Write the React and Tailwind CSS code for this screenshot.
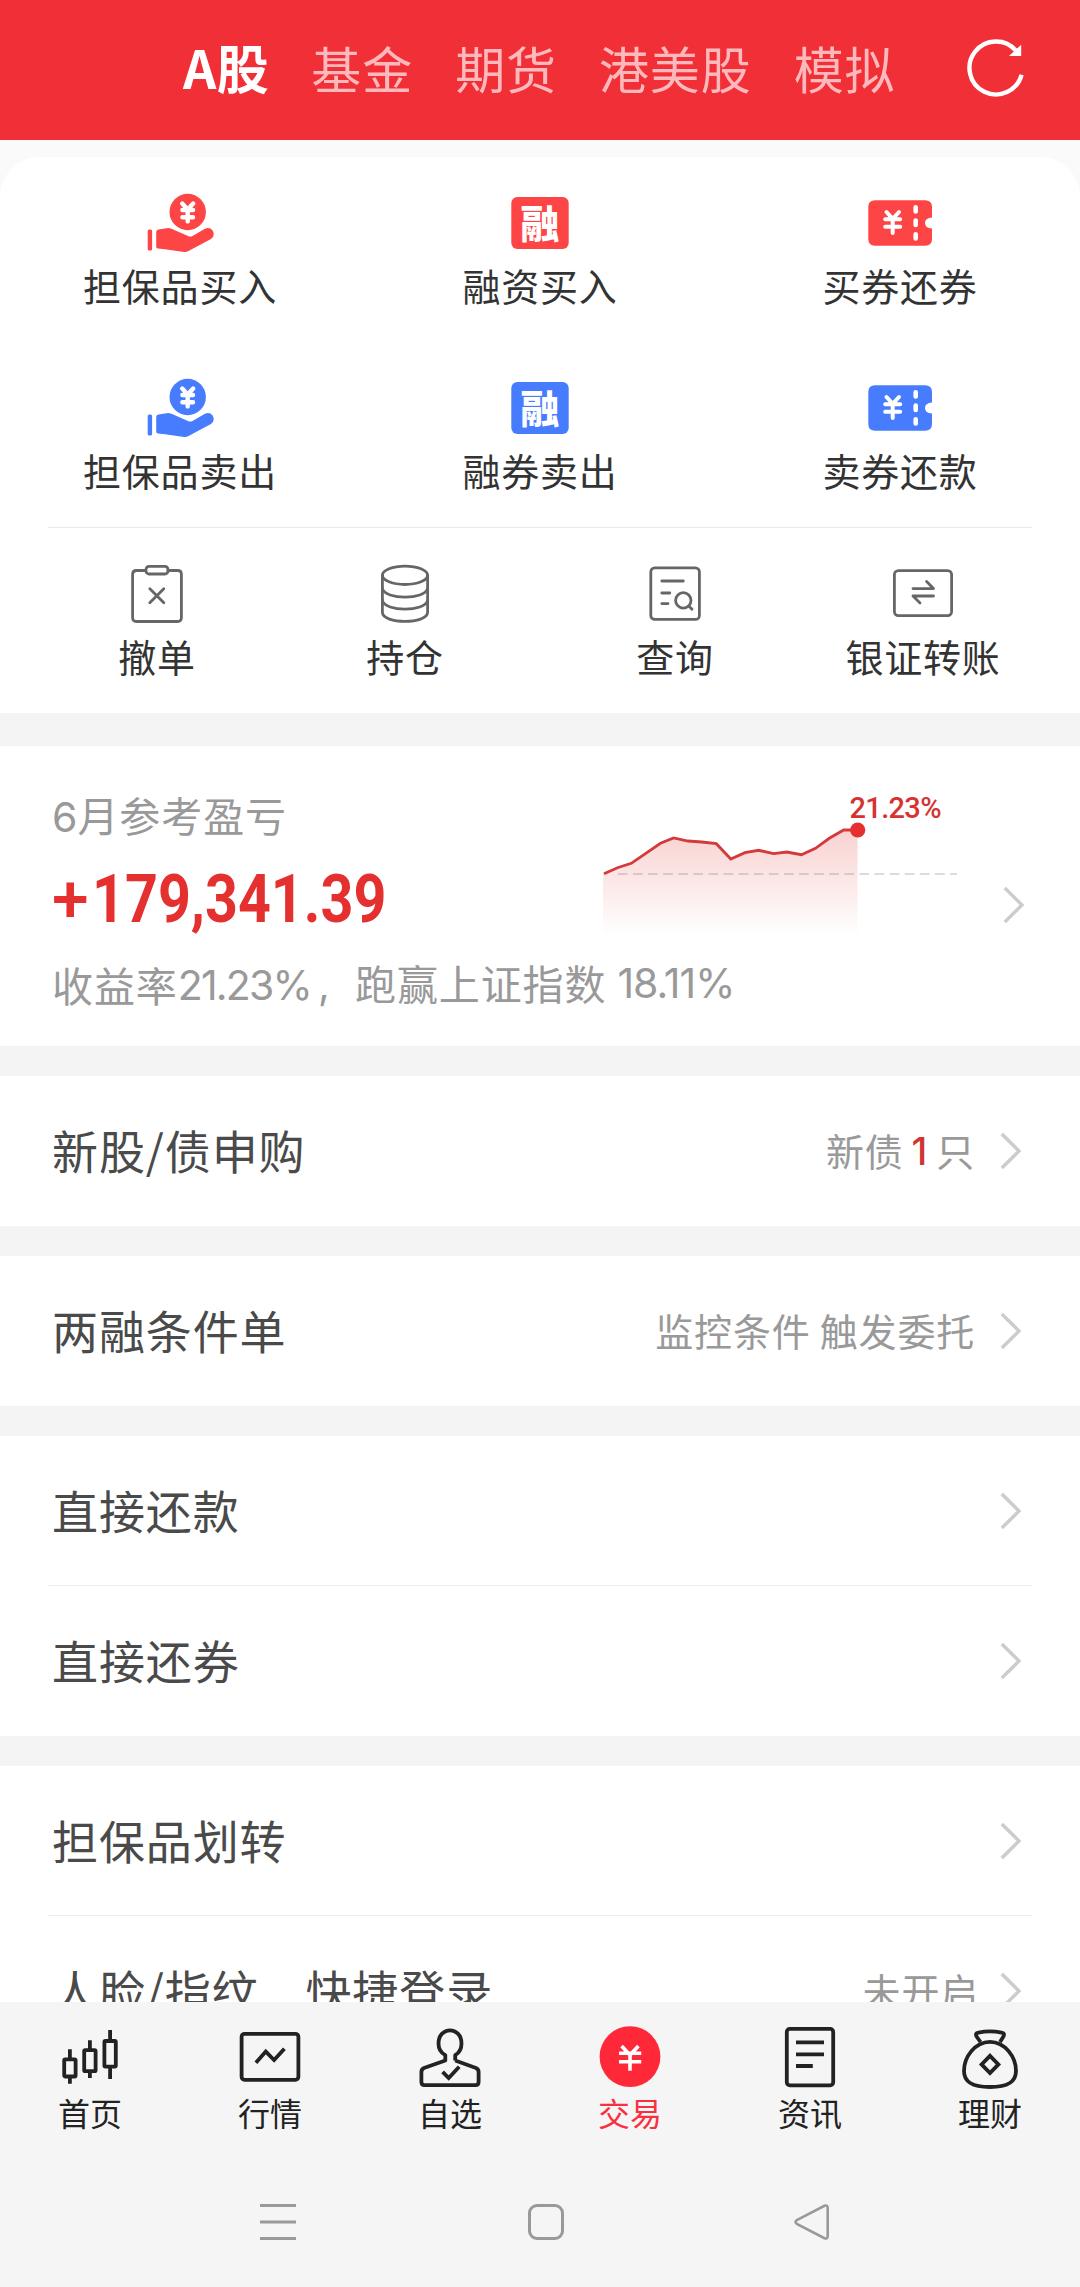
import React, { useState } from 'react';

const tabs = ['A股', '基金', '期货', '港美股', '模拟'];

const RefreshIcon = () => (
  <svg width="60" height="60" viewBox="0 0 60 60" fill="none" stroke="#fff" strokeWidth="4.4" className="overflow-visible">
    <path d="M55.6 34.7 A26.5 26.5 0 1 1 50 10.6" />
    <path d="M55.2 4.8 V16 H43 Z" fill="#fff" stroke="none" />
  </svg>
);

const HandIcon = ({ color }) => (
  <svg width="67" height="60" viewBox="0 0 67 60">
    <circle cx="40.7" cy="19" r="18.2" fill={color} />
    <path
      d="M35.2 10.6 L40.7 16.4 L46.2 10.6 M35.4 17 H46 M35.4 24.2 H46 M40.7 16.4 V28.4"
      fill="none"
      stroke="#fff"
      strokeWidth="4.4"
      strokeLinecap="round"
    />
    <rect x="0.7" y="36.5" width="4.4" height="21" rx="1.6" fill={color} />
    <path
      d="M9.2 39 Q9.3 36.8 11.5 36.6 L19.5 35.2 Q22 34.8 24.5 35.7 L41 43 Q43.3 44.2 45.5 43 L57.5 36 Q62.5 33.5 65.6 37.5 Q68.5 42.5 64 45.9 L41 58.3 Q39.3 59.4 37 59 L18 56.2 L11 55.6 Q9.2 55.4 9.2 53.4 Z"
      fill={color}
    />
  </svg>
);

const RongIcon = ({ color }) => (
  <svg width="58" height="52" viewBox="0 0 58 52" className="overflow-visible">
    <rect x="0.3" y="0" width="57.4" height="52" rx="6" fill={color} />
    <text x="29" y="40.5" fontSize="39" fontWeight="900" fill="#fff" textAnchor="middle">融</text>
  </svg>
);

const TicketIcon = ({ color }) => (
  <svg width="64" height="46" viewBox="0 0 64 46">
    <path
      d="M7 0.3 H57 Q64 0.3 64 7 V17.5 Q57 18 57 23 Q57 28 64 28.5 V39 Q64 45.7 57 45.7 H7 Q0.3 45.7 0.3 39 V7 Q0.3 0.3 7 0.3 Z"
      fill={color}
    />
    <path
      d="M18.5 12 L24.7 18.8 L31 12 M17.2 19.2 H32.2 M17.2 26.7 H32.2 M24.7 19 V33"
      fill="none"
      stroke="#fff"
      strokeWidth="4"
      strokeLinecap="round"
    />
    <path d="M47.7 7.3 V11.5 M47.7 20.6 V25 M47.7 34.3 V38.5" stroke="#fff" strokeWidth="4.6" strokeLinecap="round" />
  </svg>
);

const RED = '#fe4545';
const BLUE = '#487cff';

const mainActions = [
  { label: '担保品买入', icon: <HandIcon color={RED} /> },
  { label: '融资买入', icon: <RongIcon color={RED} /> },
  { label: '买券还券', icon: <TicketIcon color={RED} /> },
  { label: '担保品卖出', icon: <HandIcon color={BLUE} /> },
  { label: '融券卖出', icon: <RongIcon color={BLUE} /> },
  { label: '卖券还款', icon: <TicketIcon color={BLUE} /> },
];

const Line = ({ children }) => (
  <svg
    width="60"
    height="60"
    viewBox="0 0 60 60"
    fill="none"
    stroke="#666"
    strokeWidth="2.8"
    strokeLinecap="round"
    strokeLinejoin="round"
  >
    {children}
  </svg>
);

const subActions = [
  [
    {
      label: '撤单',
      icon: (
        <Line>
          <path d="M18.5 6.5 H9.5 Q5.6 6.5 5.6 10.5 V53.5 Q5.6 57.5 9.5 57.5 H50.5 Q54.4 57.5 54.4 53.5 V10.5 Q54.4 6.5 50.5 6.5 H41" />
          <rect x="19" y="2.4" width="22" height="7.6" rx="3" />
          <path d="M22.8 24.8 L36.8 38.8 M36.8 24.8 L22.8 38.8" />
        </Line>
      ),
    },
    {
      label: '持仓',
      icon: (
        <Line>
          <ellipse cx="30" cy="11.3" rx="22.6" ry="9.2" />
          <path d="M7.4 11.3 V48.3 C7.4 60.5 52.6 60.5 52.6 48.3 V11.3" />
          <path d="M7.4 24.5 C10 36 50 36 52.6 24.5 M7.4 36.5 C10 48 50 48 52.6 36.5" />
        </Line>
      ),
    },
  ],
  [
    {
      label: '查询',
      icon: (
        <Line>
          <rect x="5.8" y="3.8" width="48.6" height="51.6" rx="4" />
          <path d="M16.8 17 H38.3 M16.8 29 H24.8 M16.8 39.6 H23" />
          <circle cx="38.3" cy="36.4" r="7.7" />
          <path d="M43.8 42 L47 45.3" />
        </Line>
      ),
    },
    {
      label: '银证转账',
      icon: (
        <Line>
          <rect x="1.4" y="6.6" width="57.2" height="45" rx="4" />
          <path d="M20 24.6 H40.5 L33.6 17.6 M40.5 32 H20 L27 39" />
        </Line>
      ),
    },
  ],
];

const Chevron = () => (
  <svg width="22" height="38" viewBox="0 0 22 38" fill="none" stroke="#ccc" strokeWidth="3.4">
    <path d="M1.8 2 L19 19 L1.8 36" />
  </svg>
);

const groups = [
  [{ label: '新股/债申购', value: (<>新债<b className="mx-[8px] pt-[2px] font-['Inter'] text-[38px] font-medium text-[#d03535]">1</b>只</>) }],
  [{ label: '两融条件单', value: '监控条件 触发委托' }],
  [{ label: '直接还款' }, { label: '直接还券' }],
  [{ label: '担保品划转' }, { label: '人脸/指纹　快捷登录', value: <span className="-mr-[4px]">未开启</span> }],
];

const NavIcon = ({ children }) => (
  <svg width="66" height="66" viewBox="0 0 66 66" fill="none" stroke="#222" strokeWidth="3.8">
    {children}
  </svg>
);

const navItems = [
  {
    label: '首页',
    icon: (
      <NavIcon>
        <rect x="7.2" y="35.3" width="11.4" height="17.2" rx="1" />
        <rect x="27.2" y="26.2" width="11.4" height="21" rx="1" />
        <rect x="47.4" y="17" width="11.4" height="25.6" rx="1" />
        <path d="M12.9 25.3 V35 M12.9 53 V59.7 M32.9 16.3 V26 M32.9 47 V54 M53.1 6 V17 M53.1 43 V55" />
      </NavIcon>
    ),
  },
  {
    label: '行情',
    icon: (
      <NavIcon>
        <rect x="4.6" y="9.8" width="56.8" height="46" rx="3" />
        <path d="M18.9 38.7 L28.8 27.6 L37.1 36 L47.4 24.7" />
      </NavIcon>
    ),
  },
  {
    label: '自选',
    icon: (
      <NavIcon>
        <path
          d="M38.2 36.5 V31.2 Q44.5 27.5 44.5 19.5 C44.5 2 21.5 2 21.5 19.5 Q21.5 27.5 28.3 31.2 V36.5 L7 44 Q4.4 45.2 4.4 48 V58 Q4.4 61.2 7.5 61.2 H58.5 Q61.6 61.2 61.6 58 V48 Q61.6 45.2 59 44 L38.2 36.5"
          strokeLinejoin="round"
        />
        <path d="M25.6 47.8 L31.7 54 L42.2 42.8" />
      </NavIcon>
    ),
  },
  {
    label: '交易',
    active: true,
    icon: (
      <NavIcon>
        <circle cx="33" cy="32.7" r="30.4" fill="#ff2838" stroke="none" />
        <path d="M24.6 22 L33 31 L41.4 22 M22 29.3 H44.2 M22 37.7 H44.2 M33 30 V46.7" stroke="#fff" strokeWidth="3.6" />
      </NavIcon>
    ),
  },
  {
    label: '资讯',
    icon: (
      <NavIcon>
        <rect x="9.8" y="4.9" width="46.4" height="56.4" rx="3" />
        <path d="M19 18.3 H47 M19 30.3 H47 M19 42 H35.8" />
      </NavIcon>
    ),
  },
  {
    label: '理财',
    icon: (
      <NavIcon>
        <path d="M23.5 18 L19.6 12.6 Q17.8 9.2 21.4 8.6 Q33 6.2 44.6 8.6 Q48.2 9.2 46.4 12.6 L43 18" />
        <path d="M33 17.8 C48 17.8 59 33 59 47 C59 58.5 50 63 33 63 C16 63 7 58.5 7 47 C7 33 18 17.8 33 17.8 Z" />
        <path d="M33 31.8 L41.4 40.4 L33 49 L24.6 40.4 Z" />
      </NavIcon>
    ),
  },
];

const ProfitChart = () => {
  const line =
    '4,83.7 17.5,77.7 31.3,73.3 60.5,53.3 73.6,48 88,51 101.8,52 116.3,53.7 130.8,69 144.9,62.7 158.7,60.3 173.5,63.7 186.9,62 201.4,64.7 215.5,58.3 229.3,48.3 243.7,40 257.5,40';
  return (
    <svg width="360" height="150" viewBox="0 0 360 150" className="font-['Roboto']">
      <defs>
        <linearGradient id="profit" x1="0" y1="40" x2="0" y2="146" gradientUnits="userSpaceOnUse">
          <stop offset="0" stopColor="#e53030" stopOpacity="0.22" />
          <stop offset="1" stopColor="#e53030" stopOpacity="0" />
        </linearGradient>
      </defs>
      <line x1="17.8" y1="84" x2="357" y2="84" stroke="#dcdcdc" strokeWidth="2" strokeDasharray="9.8 5.3" />
      <polygon points={`3,146 3,84 ${line} 257.5,146`} fill="url(#profit)" />
      <polyline points={line} fill="none" stroke="#d33a3a" strokeWidth="2.8" />
      <circle cx="257.7" cy="40" r="7.6" fill="#e53030" />
      <text x="249.5" y="28" fontSize="29" fontWeight="500" fill="#d63232" textLength="92">21.23%</text>
    </svg>
  );
};

const App = () => {
  const [tab, setTab] = useState('A股');

  return (
    <div className="flex h-[2287px] w-[1080px] flex-col overflow-hidden bg-[#f4f4f4] font-['Noto_Sans_CJK_SC',sans-serif] text-[#333]">
      <header className="flex h-[140px] shrink-0 items-center justify-between bg-[#f12f37] pr-[54px] pl-[183px]">
        <nav className="flex items-center gap-[42px] pb-[6px] text-[50px] leading-[60px] tracking-[0.9px]">
          {tabs.map((t) => (
            <button
              key={t}
              onClick={() => setTab(t)}
              className={t === tab ? 'text-[52px] font-bold tracking-[0.5px] text-white' : 'text-[#ffb9bc]'}
            >
              {t}
            </button>
          ))}
        </nav>
        <RefreshIcon />
      </header>

      <main className="min-h-0 flex-1 overflow-hidden">
        <div className="bg-[#fafafa] pt-[17px]">
          <section className="h-[556px] rounded-t-[40px] bg-white">
            <div className="grid h-[370px] grid-cols-3 grid-rows-2">
              {mainActions.map((a) => (
                <div key={a.label} className="flex flex-col items-center pt-[34px]">
                  <div className="flex h-[64px] items-center">{a.icon}</div>
                  <span className="mt-[9px] text-[38px] leading-[42px] tracking-[0.8px]">{a.label}</span>
                </div>
              ))}
            </div>
            <div className="mx-12 h-px bg-[#e9e9e9]" />
            <div className="flex gap-[22px] px-[33px] pt-[36px]">
              {subActions.map((pair, i) => (
                <div key={i} className="grid flex-1 grid-cols-2">
                  {pair.map((a) => (
                    <div key={a.label} className="flex flex-col items-center">
                      {a.icon}
                      <span className="mt-[11px] text-[38px] leading-[42px] tracking-[0.8px]">{a.label}</span>
                    </div>
                  ))}
                </div>
              ))}
            </div>
          </section>
        </div>

        <section className="mt-[33px] flex h-[300px] bg-white pl-[52px] text-[#999]">
          <div className="w-[548px] pt-[43px] whitespace-nowrap">
            <p className="text-[41px] leading-[50px] tracking-[0.9px]">
              <span className="font-['Inter'] tracking-normal">6</span>月参考盈亏
            </p>
            <p className="mt-[22px] flex font-['Roboto'] leading-[72px] text-[#e53030]">
              <span className="w-[40px] text-[66px] font-medium">+</span>
              <span className="origin-left scale-x-[0.87] text-[66px] font-bold">179,341.39</span>
            </p>
            <p className="mt-[22px] flex items-center text-[41px] leading-[50px] tracking-[0.9px]">
              收益率
              <span className="pt-[2px] font-['Inter'] tracking-[-1.8px]">21.23%</span>
              <span className="w-[44px] shrink-0 pl-[7px] font-['Inter']">,</span>
              <span className="-mt-[5px]">跑赢上证指数</span>
              <span className="-mt-[3px] ml-[11px] font-['Inter'] tracking-[-1px]">18.11%</span>
            </p>
          </div>
          <div className="pt-[44px]">
            <ProfitChart />
          </div>
          <div className="ml-[43px] pt-[140px]">
            <Chevron />
          </div>
        </section>

        {groups.map((rows, i) => (
          <section key={i} className="mt-[30px] bg-white">
            {rows.map((row, j) => (
              <div key={row.label}>
                {j > 0 && <div className="mx-12 -mt-px h-px bg-[#ececec]" />}
                <div className="flex h-[150px] items-center pr-[58px] pl-[52px]">
                  <span className="flex-1 pb-[4px] text-[46px] leading-[60px] tracking-[0.9px] text-[#4a4a4a]">
                    {row.label}
                  </span>
                  <span className="mr-[25px] flex items-center pb-[2px] text-[38px] leading-[50px] tracking-[0.8px] whitespace-pre text-[#999]">
                    {row.value}
                  </span>
                  <Chevron />
                </div>
              </div>
            ))}
          </section>
        ))}
      </main>

      <footer className="h-[285px] shrink-0 bg-[#f5f5f5]">
        <nav className="grid grid-cols-6 pt-[22px]">
          {navItems.map((n) => (
            <div key={n.label} className="flex flex-col items-center">
              {n.icon}
              <span
                className={
                  n.active
                    ? 'mt-[3px] text-[32px] leading-[38px] text-[#f9303f]'
                    : 'mt-[3px] text-[32px] leading-[38px] text-[#222]'
                }
              >
                {n.label}
              </span>
            </div>
          ))}
        </nav>
        <div className="mt-[73px] flex items-center pl-[260px]">
          <svg width="36" height="36" viewBox="0 0 36 36" stroke="#999" strokeWidth="3">
            <path d="M0 1.5 H36 M0 18 H36 M0 34.5 H36" />
          </svg>
          <div className="ml-[232px] h-[36px] w-[36px] rounded-[9px] border-[3px] border-[#999]" />
          <svg width="36" height="36" viewBox="0 0 36 36" fill="none" stroke="#999" strokeWidth="2.6" className="ml-[230px]">
            <path d="M2.8 16.2 L30.5 1.8 Q33.6 0.8 33.7 4 V32 Q33.6 35.2 30.5 34.2 L2.8 19.8 Q0.2 18 2.8 16.2 Z" />
          </svg>
        </div>
      </footer>
    </div>
  );
};

export default App;
